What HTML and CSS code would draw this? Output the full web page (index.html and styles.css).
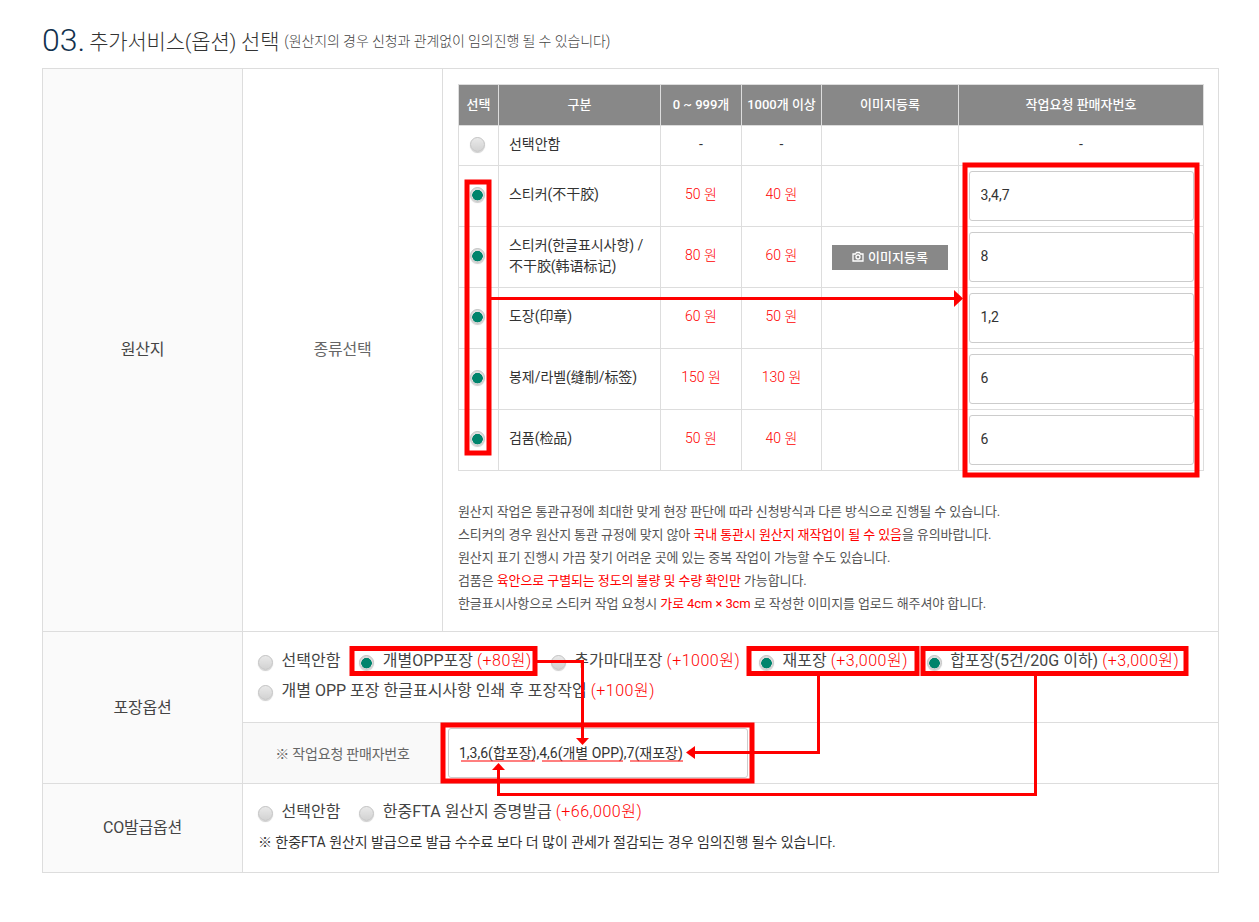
FILE: index.html
```html
<!DOCTYPE html>
<html lang="ko">
<head>
    <meta charset="UTF-8">
    <title>추가서비스 선택</title>
    <link rel="stylesheet" href="styles.css">
</head>
<body>
<div id="wrap">
    <div class="title">
        <span class="num">03.</span>
        <span class="main">추가서비스(옵션) 선택</span>
        <span class="sub">(원산지의 경우 신청과 관계없이 임의진행 될 수 있습니다)</span>
    </div>

    <table class="outer">
        <colgroup><col class="c-label"><col class="c-label"><col></colgroup>
        <tr class="r-origin">
            <th>원산지</th>
            <td class="kind">종류선택</td>
            <td class="origin-cell">
                <table class="inner">
                    <colgroup>
                        <col class="i1"><col class="i2"><col class="i3"><col class="i4"><col class="i5"><col>
                    </colgroup>
                    <tr class="head">
                        <th>선택</th><th>구분</th><th>0 ~ 999개</th><th>1000개 이상</th><th>이미지등록</th><th>작업요청 판매자번호</th>
                    </tr>
                    <tr class="none">
                        <td><input type="radio"></td>
                        <td class="name">선택안함</td>
                        <td>-</td><td>-</td><td></td><td>-</td>
                    </tr>
                    <tr>
                        <td><input type="radio" checked></td>
                        <td class="name">스티커(不干胶)</td>
                        <td class="price">50 원</td><td class="price">40 원</td><td></td>
                        <td class="field"><input class="box" type="text" value="3,4,7"></td>
                    </tr>
                    <tr>
                        <td><input type="radio" checked></td>
                        <td class="name">스티커(한글표시사항) /<br>不干胶(韩语标记)</td>
                        <td class="price">80 원</td><td class="price">60 원</td>
                        <td class="field">
                            <button class="img-btn">
                                <svg width="12" height="11" viewBox="0 0 12 11" fill="none" stroke="#fff" stroke-width="1.3"><path d="M1 3h2.500l1-1.500h3l1 1.500H11v7H1z"/><circle cx="6" cy="6" r="2"/></svg>
                                이미지등록
                            </button>
                        </td>
                        <td class="field"><input class="box" type="text" value="8"></td>
                    </tr>
                    <tr>
                        <td><input type="radio" checked></td>
                        <td class="name">도장(印章)</td>
                        <td class="price">60 원</td><td class="price">50 원</td><td></td>
                        <td class="field"><input class="box" type="text" value="1,2"></td>
                    </tr>
                    <tr>
                        <td><input type="radio" checked></td>
                        <td class="name">봉제/라벨(缝制/标签)</td>
                        <td class="price">150 원</td><td class="price">130 원</td><td></td>
                        <td class="field"><input class="box" type="text" value="6"></td>
                    </tr>
                    <tr>
                        <td><input type="radio" checked></td>
                        <td class="name">검품(检品)</td>
                        <td class="price">50 원</td><td class="price">40 원</td><td></td>
                        <td class="field"><input class="box" type="text" value="6"></td>
                    </tr>
                </table>
                <div class="notes">
                    <p>원산지 작업은 통관규정에 최대한 맞게 현장 판단에 따라 신청방식과 다른 방식으로 진행될 수 있습니다.</p>
                    <p>스티커의 경우 원산지 통관 규정에 맞지 않아 <em>국내 통관시 원산지 재작업이 될 수 있음</em>을 유의바랍니다.</p>
                    <p>원산지 표기 진행시 가끔 찾기 어려운 곳에 있는 중복 작업이 가능할 수도 있습니다.</p>
                    <p>검품은 <em>육안으로 구별되는 정도의 불량 및 수량 확인만</em> 가능합니다.</p>
                    <p>한글표시사항으로 스티커 작업 요청시 <em>가로 4cm × 3cm</em> 로 작성한 이미지를 업로드 해주셔야 합니다.</p>
                </div>
            </td>
        </tr>
        <tr class="r-pack">
            <th rowspan="2">포장옵션</th>
            <td colspan="2" class="options">
                <label class="opt"><input type="radio">선택안함</label>
                <label class="opt"><input type="radio" checked>개별OPP포장 <em>(+80원)</em></label>
                <label class="opt"><input type="radio">추가마대포장 <em>(+1000원)</em></label>
                <label class="opt"><input type="radio" checked>재포장 <em>(+3,000원)</em></label>
                <label class="opt"><input type="radio" checked>합포장(5건/20G 이하) <em>(+3,000원)</em></label>
                <label class="opt"><input type="radio">개별 OPP 포장 한글표시사항 인쇄 후 포장작업 <em>(+100원)</em></label>
            </td>
        </tr>
        <tr class="r-seller">
            <td class="seller-label">※ 작업요청 판매자번호</td>
            <td class="seller-cell"><input class="box seller" type="text" value="1,3,6(합포장),4,6(개별 OPP),7(재포장)"></td>
        </tr>
        <tr class="r-co">
            <th>CO발급옵션</th>
            <td colspan="2" class="options co">
                <label class="opt"><input type="radio">선택안함</label>
                <label class="opt"><input type="radio">한중FTA 원산지 증명발급 <em>(+66,000원)</em></label>
                <p class="co-note">※ 한중FTA 원산지 발급으로 발급 수수료 보다 더 많이 관세가 절감되는 경우 임의진행 될수 있습니다.</p>
            </td>
        </tr>
    </table>

    <!-- 빨간 표시 -->
    <svg class="marks" width="1259" height="922" viewBox="0 0 1259 922" fill="none" stroke="#f00">
        <g stroke-width="5">
            <rect x="467" y="182" width="22" height="271"/>
            <rect x="965" y="165" width="232" height="310"/>
            <rect x="352" y="648.500" width="183" height="25"/>
            <rect x="749" y="648.500" width="168" height="25"/>
            <rect x="923" y="648.500" width="263" height="25"/>
            <rect x="443" y="725" width="309" height="56"/>
        </g>
        <g stroke-width="3">
            <path d="M491 298.500H955"/>
            <path d="M537 661.500H582.500V738"/>
            <path d="M818.500 676V752.500H695"/>
            <path d="M1035.500 676V794.500H498.500V769"/>
        </g>
        <g fill="#f00" stroke="none">
            <path d="M954 290l9 8.500-9 8.500z"/>
            <path d="M576 738h13l-6.500 7z"/>
            <path d="M695 746v13l-9-6.500z"/>
            <path d="M492 770h13l-6.500-7z"/>
            <path d="M461 760.500h74v1h-74zM542 760.500h81v1h-81zM630 760.500h53v1h-53z"/>
        </g>
    </svg>
</div>
</body>
</html>
```

FILE: styles.css
```css
body {
    margin: 0;
    background: #fff;
    color: #333;
    font-family: Roboto, "Noto Sans CJK KR", sans-serif;
    font-size: 14px;
}
#wrap {
    position: relative;
    width: 1177px;
    height: 922px;
    padding: 0 40px 0 42px;
}
em {
    font-style: normal;
    color: #f00;
}

.title {
    display: flex;
    align-items: center;
    height: 68px;
    padding-top: 12px;
    box-sizing: border-box;
    white-space: nowrap;
}
.title .num {
    font-size: 32px;
    font-weight: 300;
    color: #12324e;
    margin-right: 4px;
}
.title .main {
    font-size: 21px;
    font-weight: 300;
    color: #333;
    margin-right: 5px;
    letter-spacing: -0.2px;
}
.title .sub {
    font-size: 14px;
    font-weight: 300;
    color: #444;
    letter-spacing: -0.1px;
}

.outer {
    width: 1177px;
    table-layout: fixed;
    border-collapse: collapse;
}
.outer > tbody > tr > th,
.outer > tbody > tr > td {
    border: 1px solid #ddd;
    padding: 0;
}
.c-label {
    width: 200px;
}
.outer > tbody > tr > th {
    background: #fafafa;
    font-weight: 400;
    font-size: 16px;
    letter-spacing: -0.2px;
    color: #444;
    padding-bottom: 4px;
}
.outer td.kind {
    text-align: center;
    font-size: 16px;
    letter-spacing: -0.2px;
    color: #666;
    padding-bottom: 4px;
}
.r-origin {
    height: 563px;
}
.r-pack {
    height: 91px;
}
.r-seller {
    height: 61px;
}
.r-co {
    height: 89px;
}
.outer td.origin-cell {
    vertical-align: top;
    padding: 15px;
}

.inner {
    width: 746px;
    table-layout: fixed;
    border-collapse: collapse;
}
.i1 { width: 40px; }
.i2 { width: 162px; }
.i3 { width: 81px; }
.i4 { width: 80px; }
.i5 { width: 137px; }
.inner th,
.inner td {
    border: 1px solid #ddd;
    padding: 0 0 3px;
    height: 57px;
    text-align: center;
    color: #333;
    line-height: 21px;
}
.inner td.field {
    padding: 0;
    height: 60px;
}
.inner .head th {
    height: 38px;
    padding-bottom: 2px;
    background: #888;
    color: #fff;
    font-weight: 500;
    font-size: 13px;
}
.inner .none td {
    height: 37px;
    padding-bottom: 2px;
}
.inner td.name {
    text-align: left;
    padding-left: 10px;
    letter-spacing: -0.05px;
}
.inner td.price {
    color: #f00;
    font-weight: 300;
}

input[type="radio"] {
    appearance: none;
    box-sizing: border-box;
    width: 15px;
    height: 15px;
    margin: 0;
    vertical-align: middle;
    border-radius: 50%;
    border: 1px solid #c4c4c4;
    background: linear-gradient(#e9e9e9, #d2d2d2);
    box-shadow: 0 1px 1px #ccc;
}
input[type="radio"]:checked {
    background: radial-gradient(circle at 50% 55%, #00846c 0, #00846c 5px, #ddd 5.500px);
}
.inner input[type="radio"] {
    position: relative;
    top: -1px;
    left: -1px;
}

.box {
    box-sizing: border-box;
    display: block;
    width: 225px;
    height: 50px;
    margin: 0 auto;
    padding: 0 11px 2px;
    border: 1px solid #ccc;
    border-radius: 3px;
    font-family: inherit;
    font-size: 14px;
    color: #333;
    background: #fff;
}
.img-btn {
    display: inline-flex;
    align-items: center;
    justify-content: center;
    gap: 4px;
    width: 116px;
    height: 25px;
    border: 0;
    padding: 0 0 2px;
    background: #888;
    color: #fff;
    font-family: inherit;
    font-size: 13px;
    font-weight: 500;
}

.notes {
    margin-top: 29px;
    font-size: 13px;
    letter-spacing: -0.1px;
    color: #555;
}
.notes p {
    margin: 0;
    line-height: 23px;
}

.options {
    padding: 14px 0 0 15px !important;
    vertical-align: top;
    font-size: 16px;
    line-height: 30px;
    color: #444;
}
.options.co {
    padding-top: 13px !important;
}
.opt {
    display: inline-block;
    margin-right: 15px;
    white-space: nowrap;
}
.opt input {
    margin-right: 8.500px;
    position: relative;
    top: 1px;
}
.opt em {
    font-weight: 300;
    letter-spacing: 0.5px;
}
.seller-label {
    background: #f9f9f9;
    text-align: center;
    color: #666;
    letter-spacing: -0.2px;
}
.outer td.seller-cell {
    padding-left: 5px;
}
.box.seller {
    width: 300px;
    margin: 0;
    padding: 0 10px 3px;
    font-size: 14px;
}
.co-note {
    margin: 1px 0 0;
    font-size: 14px;
    letter-spacing: -0.05px;
    line-height: 28px;
    color: #333;
}

.marks {
    position: absolute;
    top: 0;
    left: 0;
    pointer-events: none;
}
```
